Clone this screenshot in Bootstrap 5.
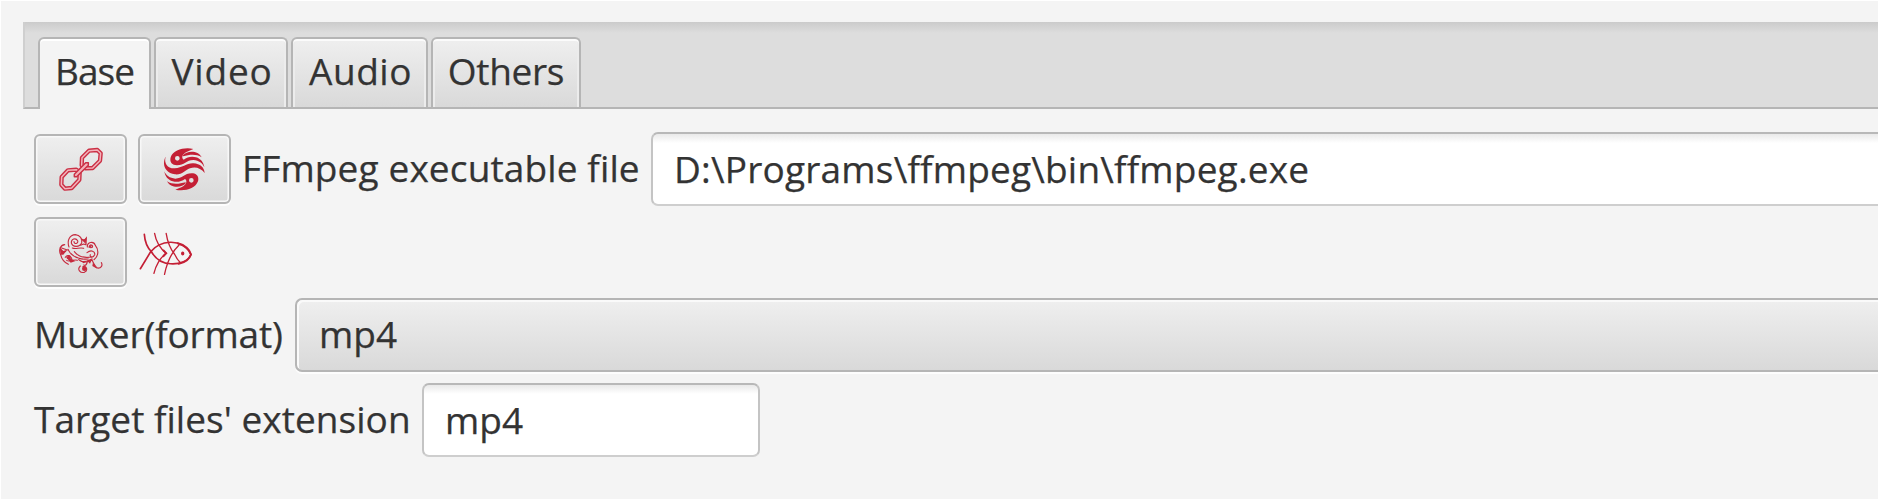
<!DOCTYPE html>
<html lang="en">
<head>
<meta charset="utf-8">
<title>Base</title>
<link href="https://cdn.jsdelivr.net/npm/bootstrap@5.3.0/dist/css/bootstrap.min.css" rel="stylesheet">
<style>
body{background:#f4f4f4;color:#333;font-family:"Open Sans","Noto Sans",sans-serif;font-size:37px;line-height:51px;height:499px;overflow:hidden;border-top:1px solid #fff;border-left:1px solid #fff;-webkit-text-stroke:.25px #333}
.tab-strip{margin:21px 0 0 22px;height:87px;padding:15px 0 0 13px;gap:3px;background:linear-gradient(#cbcbcb,#dddddd 11px);border-bottom:2px solid #b5b5b5;border-left:2px solid #cfcfcf;flex-wrap:nowrap}
.tab-strip .nav-link{height:70px;padding:0 0 5px;display:flex;align-items:center;justify-content:center;color:#333;line-height:51px;border:2px solid #b5b5b5;border-bottom:0;border-radius:6px 6px 0 0;background:linear-gradient(#efefef,#d9d9d9);box-shadow:inset 0 2px 0 #fbfbfb,inset 2px 0 0 #ececec,inset -2px 0 0 #ececec;margin:0}
.tab-strip .nav-link.active{height:72px;padding-bottom:7px;background:#f4f4f4;color:#333;border-color:#b5b5b5;box-shadow:inset 0 2px 0 #fff}
.pane{padding:23px 0 0 33px;gap:11px}
.tool{width:93px;height:70px;padding:0;border:2px solid #b5b5b5;border-radius:6px;background:linear-gradient(#efefef,#d9d9d9);box-shadow:inset 0 0 0 1.5px #f8f8f8,0 2px 0 #fdfdfd}
.tool svg{width:44px;height:44px;flex:none}
.line-row{height:74px}
.field{height:74px;border:2px solid #c4c4c4;border-color:#b8b8b8 #c4c4c4 #cecece;border-radius:7px;background:linear-gradient(#e9e9e9,#fff 9px);color:#333;font-size:37px;line-height:51px;padding:0 0 1px 21px;box-shadow:none;-webkit-text-stroke:.25px #333}
.combo{height:74px;border:2px solid #b5b5b5;border-right:0;border-radius:7px 0 0 7px;background:linear-gradient(#efefef,#d9d9d9);box-shadow:inset 2px 2px 0 #fafafa,0 2px 0 #fdfdfd;padding:0 0 3px 22px;font-size:37px;line-height:51px;color:#333}
.open-end{border-right:0;border-radius:7px 0 0 7px}
.caption{white-space:nowrap;padding-bottom:4px}
.t-base{width:113px;letter-spacing:-1px}.t-video{width:134px;letter-spacing:.8px}.tab-strip .t-video{padding-left:2px}.t-audio{width:137px;letter-spacing:.5px}.tab-strip .t-audio{padding-left:2px}.t-others{width:150px;letter-spacing:-.3px}
.c-exe{width:398px;margin-left:11px;letter-spacing:.13px}.c-mux{width:261px;letter-spacing:-.17px}.c-ext{width:388px;letter-spacing:.04px}
.f-exe{margin-left:11px;letter-spacing:.2px}
.f-ext{width:338px}
.fish{width:53px;height:44px}
</style>
<script src="https://cdn.jsdelivr.net/npm/bootstrap@5.3.0/dist/js/bootstrap.bundle.min.js"></script>
</head>
<body>
<ul class="nav tab-strip d-flex" role="tablist">
  <li class="nav-item"><a class="nav-link active t-base">Base</a></li>
  <li class="nav-item"><a class="nav-link t-video">Video</a></li>
  <li class="nav-item"><a class="nav-link t-audio">Audio</a></li>
  <li class="nav-item"><a class="nav-link t-others">Others</a></li>
</ul>
<main class="pane d-flex flex-column">
  <div class="line-row d-flex align-items-center">
    <button class="btn tool d-flex align-items-center justify-content-center flex-shrink-0" aria-label="Link">
      <svg viewBox="86 66 132 132" fill="none" stroke-linejoin="round">
        <g stroke="#cb3045" stroke-width="13">
          <path d="M113 136L138 134L148 142L147 164L124 189L104 191L93 179L94 156Z"/>
          <path d="M176 77L201 75L211 85L209 107L187 129L165 130L154 121L155 98Z"/>
        </g>
        <g stroke="#f3b3bb" stroke-width="4.5">
          <path d="M113 136L138 134L148 142L147 164L124 189L104 191L93 179L94 156Z"/>
          <path d="M176 77L201 75L211 85L209 107L187 129L165 130L154 121L155 98Z"/>
        </g>
        <path d="M132 148V155H139L174 121V113H166Z" fill="#f3b3bb" stroke="#cb3045" stroke-width="4.5"/>
      </svg>
    </button>
    <button class="btn tool d-flex align-items-center justify-content-center flex-shrink-0" style="margin-left:11px" aria-label="Swirl">
      <svg viewBox="99 67 132 132" fill="#c41f35">
        <defs>
          <path id="half" fill-rule="evenodd" d="M190 73C164 67 130 75 122 98C118 114 127 122 141 122C163 122 169 106 190 106C207 107 218 116 223 128C221 113 212 102 198 98C184 94 171 98 161 105C152 99 158 84 178 78ZM142 94A7 7 0 1 0 142 108A7 7 0 1 0 142 94Z"/>
          <path id="crest" d="M159 92C170 78 204 76 215 98C198 87 179 90 159 95Z"/>
        </defs>
        <use href="#half"/><use href="#crest"/>
        <path d="M107 96C101 116 113 132 134 131C158 130 169 115 190 116C211 117 223 129 224 145C212 130 196 125 180 131C164 137 157 151 135 149C113 147 102 131 102 116C102 108 104 101 107 96Z"/>
        <g transform="rotate(180 163 134)"><use href="#half"/><use href="#crest"/></g>
      </svg>
    </button>
    <label class="caption c-exe flex-shrink-0" for="exe">FFmpeg executable file</label>
    <input id="exe" class="form-control field open-end f-exe flex-grow-1" style="width:auto" value="D:\Programs\ffmpeg\bin\ffmpeg.exe">
  </div>
  <div class="d-flex align-items-center">
    <button class="btn tool d-flex align-items-center justify-content-center" aria-label="Turtle">
      <svg viewBox="86 60 132 132" fill="none" stroke="#c62a3e" stroke-width="3.4" stroke-linecap="round">
        <path d="M116 111C109 91 118 75 135 74C149 75 157 87 154 99C147 113 127 112 123 99C122 87 136 82 142 92C145 101 132 104 131 95"/>
        <path d="M153 87L162 91L168 84L167 104L159 102L151 106M126 114C137 119 147 111 160 115"/>
        <path d="M171 111C170 96 190 92 195 106C206 119 205 139 191 149M176 112C177 101 190 104 186 112C179 116 176 109 183 108M170 128C182 118 195 124 193 134C188 145 177 142 180 134"/>
        <path d="M113 118C122 139 148 150 174 147M132 125C143 139 160 145 184 141" stroke-dasharray="12 3"/>
        <path d="M103 104C90 105 84 121 91 134C94 148 101 157 114 163M94 114L111 120M94 126L106 124M105 142C111 132 119 137 124 145M109 151C118 158 128 146 141 151M111 145L130 151"/>
        <path d="M145 149C154 159 172 157 186 150M150 168C139 178 150 190 162 187C174 182 169 167 158 170M172 153C169 164 166 168 160 165M185 150C190 161 194 169 201 174C212 176 218 166 213 158"/>
        <g fill="#c62a3e" stroke="none"><path d="M88 111L99 123L111 119L99 134L91 134ZM107 141L119 135L122 149L136 153L121 158ZM145 149C161 157 174 151 187 144L179 161L171 153L160 160ZM188 157L200 176L186 168ZM155 91L168 85L166 101Z"/><circle cx="162" cy="176" r="7"/></g>
      </svg>
    </button>
    <svg class="fish" style="margin-left:12px;margin-top:3px" viewBox="327 64 160 133" fill="none" stroke="#c41f35" stroke-width="4" stroke-linecap="round">
      <path d="M343 71C345 97 354 113 364 123C377 146 398 159 422 160C452 162 476 151 484 132C473 108 448 94 421 95C393 96 375 108 362 124L331 175" stroke-width="5"/>
      <path d="M374 68C379 97 393 115 409 128C390 143 378 165 372 189M409 68C413 94 423 117 435 132C440 143 445 150 452 157M448 103C431 119 413 149 404 192" stroke-width="4"/>
      <path d="M444 98C466 103 481 118 484 132C479 147 464 157 447 160M401 120L409 128L401 137" stroke-width="6"/>
      <ellipse cx="459" cy="129" rx="3" ry="4" fill="#c41f35"/>
    </svg>
  </div>
  <div class="line-row d-flex align-items-center">
    <span class="caption c-mux flex-shrink-0">Muxer(format)</span>
    <div class="combo d-flex align-items-center flex-grow-1" role="combobox">mp4</div>
  </div>
  <div class="line-row d-flex align-items-center">
    <label class="caption c-ext flex-shrink-0" for="ext">Target files' extension</label>
    <input id="ext" class="form-control field f-ext" value="mp4">
  </div>
</main>
</body>
</html>
